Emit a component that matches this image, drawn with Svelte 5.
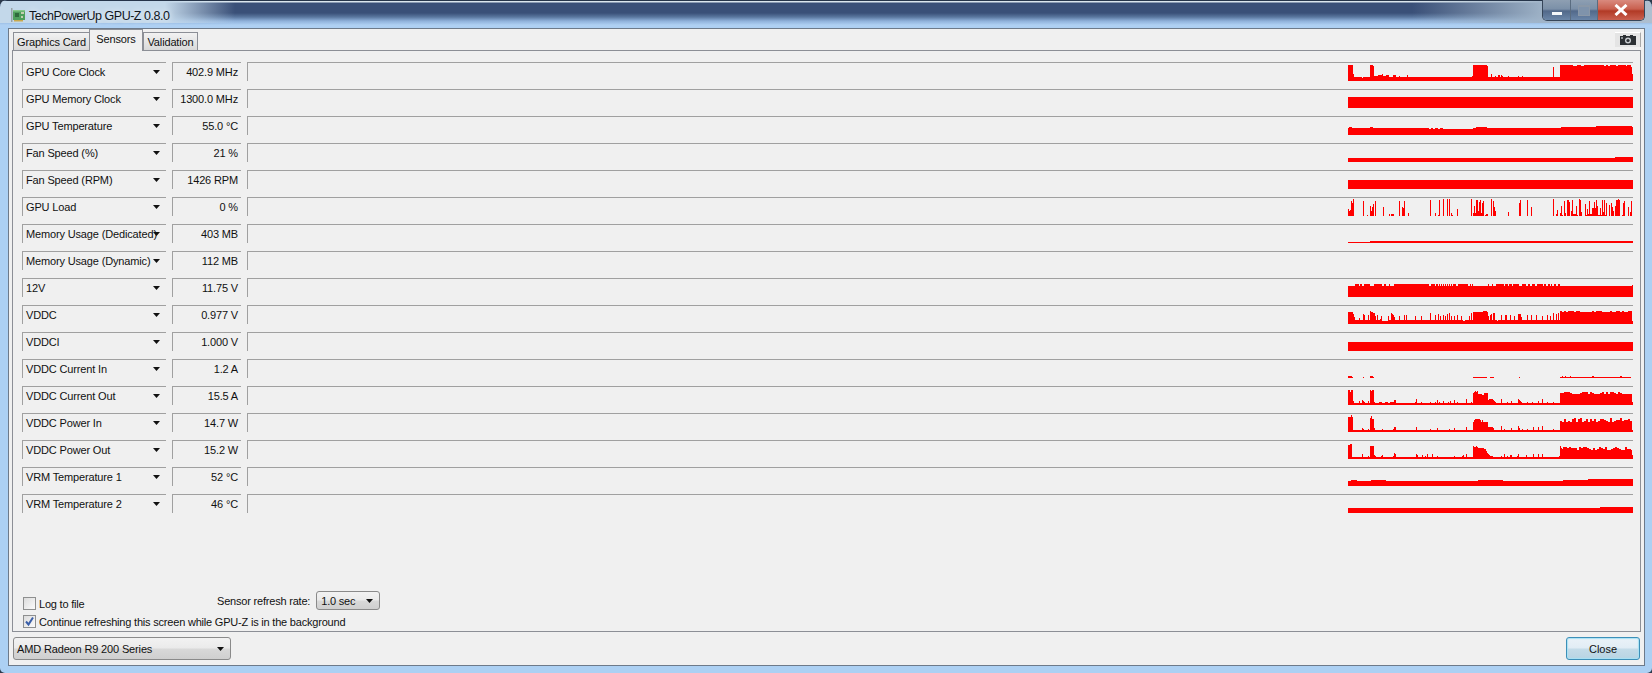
<script>
  const W = 285;
  const noise = (a, b, lo, hi, seed) => {
    const out = [];
    let s = seed;
    for (let x = a; x < b; x += 6) {
      s = (s * 137 + 59) % 251;
      out.push([x, Math.min(x + 6, b), lo + (s % (hi - lo + 1))]);
    }
    return out;
  };
  const bumps = (h, list) => list.map((p) => [p[0], p[1], h]);
  const load = [[24,7],[27,5],[30,6],[33,15],[36,13],[39,17],[69,15],[81,1],[90,10],[93,5],[96,9],[99,12],[105,15],[129,9],[147,2],[153,2],[156,2],[159,2],[177,15],[186,9],[189,8],[192,15],[204,3],[270,16],[285,3],[294,1],[297,16],[309,17],[321,17],[327,17],[333,3],[336,1],[351,7],[393,17],[399,3],[402,10],[405,3],[408,16],[411,16],[414,5],[417,14],[420,16],[423,3],[426,13],[429,15],[435,1],[438,2],[441,2],[453,17],[459,15],[462,9],[465,5],[504,4],[537,13],[540,16],[561,16],[573,9],[639,17],[648,2],[651,6],[660,3],[663,10],[666,1],[672,15],[675,3],[681,16],[684,16],[687,14],[693,5],[696,16],[699,2],[702,2],[705,2],[708,10],[711,1],[717,17],[720,16],[723,4],[735,12],[738,1],[741,7],[744,2],[747,15],[750,2],[753,2],[756,8],[759,8],[762,14],[765,8],[768,16],[771,10],[774,1],[777,1],[780,8],[783,1],[786,16],[789,4],[792,16],[795,1],[798,13],[807,11],[813,13],[816,9],[819,5],[825,10],[828,16],[831,16],[834,17],[837,16],[846,1],[849,13],[852,15],[864,9],[870,4],[873,15]];

  const sensors = [
    { name: 'GPU Core Clock', value: '402.9 MHz', base: 4, parts: [[24,39,16],[39,42,7],[66,3],[90,99,16],[99,102,15],[102,114,5],[114,126,6],[126,7],[129,138,5],[138,147,6],[159,168,6],[177,5],[201,6],[396,5],[399,441,16],[441,444,15],[453,7],[465,5],[474,480,6],[483,6],[486,5],[504,5],[534,5],[546,5],[639,14],[660,876,16],[699,711,15],[723,732,15],[792,798,15],[804,810,15],[828,834,15],[858,861,15],[873,876,14],[876,879,7]] },
    { name: 'GPU Memory Clock', value: '1300.0 MHz', base: 11, parts: [] },
    { name: 'GPU Temperature', value: '55.0 °C', base: 7, parts: [[27,36,8],[90,99,8],[267,273,6],[279,285,6],[294,300,6],[309,399,6],[399,408,7],[408,441,8],[663,768,8],[768,876,9],[876,879,8]] },
    { name: 'Fan Speed (%)', value: '21 %', base: 4, parts: [[825,879,5]] },
    { name: 'Fan Speed (RPM)', value: '1426 RPM', base: 9, parts: [] },
    { name: 'GPU Load', value: '0 %', base: 0, parts: load },
    { name: 'Memory Usage (Dedicated)', value: '403 MB', base: 2, parts: [[24,90,1]] },
    { name: 'Memory Usage (Dynamic)', value: '112 MB', base: 0, parts: [] },
    { name: '12V', value: '11.75 V', base: 11, parts: [...bumps(13, [[45,57],[60,66],[72,90],[102,126],[132,138],[147,150],[162,267],[273,285],[288,294],[297,300],[303,306],[309,312],[315,318],[321,324],[327,330],[333,336],[339,348],[354,384],[390,393],[396,399],[444,447],[456,459],[468,492],[495,504],[507,516],[519,537],[546,558],[564,570],[576,585],[591,609],[612,618],[624,630],[633,636],[642,648],[654,660]]),[876,879,12]] },
    { name: 'VDDC', value: '0.977 V', base: 4, parts: [[24,39,12],[39,10],[42,7],[57,6],[69,10],[72,9],[84,9],[90,13],[93,99,12],[99,105,11],[105,8],[111,9],[120,5],[123,8],[126,144,3],[144,8],[153,11],[156,10],[159,9],[162,7],[177,8],[192,9],[198,9],[225,8],[243,8],[270,11],[285,9],[294,10],[300,8],[309,9],[315,8],[321,10],[327,11],[333,8],[342,8],[351,9],[363,8],[369,375,3],[387,8],[393,11],[399,429,12],[429,441,13],[441,444,12],[444,8],[450,9],[453,10],[459,465,11],[465,4],[471,3],[483,9],[495,501,9],[510,9],[522,8],[534,543,10],[543,7],[561,9],[573,9],[588,9],[606,8],[621,9],[630,8],[639,11],[648,10],[654,11],...noise(660,876,12,13,17),[876,3]] },
    { name: 'VDDCI', value: '1.000 V', base: 9, parts: [] },
    { name: 'VDDC Current In', value: '1.2 A', base: 0, parts: [[24,36,2],[36,1],[69,1],[90,99,2],[99,1],[399,441,1],[450,462,1],[537,1],[660,873,1],[666,2],[675,2],[690,2],[756,762,2],[840,846,2]] },
    { name: 'VDDC Current Out', value: '15.5 A', base: 2, parts: [[24,30,15],[30,13],[33,39,15],[39,4],[57,4],[66,5],[69,4],[72,3],[84,4],[90,15],[93,14],[96,102,15],[102,3],[117,126,3],[135,144,3],[150,162,3],[162,168,5],[225,3],[228,6],[243,3],[270,3],[285,3],[291,5],[297,3],[309,4],[324,3],[330,4],[342,5],[351,3],[378,6],[393,3],[399,12],[402,13],[405,14],[408,13],[411,14],[414,426,11],[426,432,10],[432,444,12],[444,447,5],[447,459,6],[459,462,5],[462,4],[465,3],[483,6],[501,3],[513,4],[534,6],[537,5],[540,4],[543,3],[561,3],[576,3],[594,4],[606,6],[621,3],[639,3],...noise(660,876,11,13,41),[876,3]] },
    { name: 'VDDC Power In', value: '14.7 W', base: 2, parts: [[24,33,15],[33,17],[36,15],[66,4],[69,3],[84,3],[90,14],[93,16],[96,102,13],[102,4],[126,3],[159,3],[162,168,5],[228,5],[270,3],[291,4],[327,3],[342,4],[378,5],[399,10],[402,12],[405,420,13],[420,12],[423,10],[426,12],[429,10],[432,444,10],[444,459,5],[459,4],[483,6],[492,3],[513,4],[534,6],[537,4],[546,3],[561,3],[579,5],[594,5],[606,6],[639,3],[660,666,11],...noise(666,876,10,14,73),[876,2]] },
    { name: 'VDDC Power Out', value: '15.2 W', base: 2, parts: [[24,36,14],[30,36,15],[66,5],[84,3],[90,102,13],[102,4],[105,3],[123,3],[126,4],[159,3],[162,165,6],[165,168,5],[228,5],[231,4],[246,4],[255,3],[261,5],[276,5],[291,3],[342,3],[366,3],[369,4],[378,5],[399,13],[402,408,12],[408,13],[411,414,12],[414,432,11],[432,438,10],[438,8],[441,6],[444,5],[447,4],[450,459,3],[483,3],[492,5],[501,3],[510,516,4],[531,3],[534,5],[558,4],[579,5],[594,5],[606,5],[657,3],[660,13],[663,11],[666,669,10],...noise(669,876,9,12,101),[876,4]] },
    { name: 'VRM Temperature 1', value: '52 °C', base: 5, parts: [[33,51,6],[93,138,6],[414,489,6],[669,744,6],[744,879,7]] },
    { name: 'VRM Temperature 2', value: '46 °C', base: 5, parts: [[780,879,6]] }
  ];

  const H = 18;
  const toPath = (s) => {
    const a = new Array(W).fill(s.base);
    for (const p of s.parts) {
      const [z0, z1, h] = p.length === 3 ? p : [p[0], p[0] + 3, p[1]];
      const i0 = Math.round((z0 - 24) / 3), i1 = Math.round((z1 - 24) / 3);
      for (let i = i0; i < i1 && i < W; i++) a[i] = h;
    }
    let d = `M0 ${H}`;
    a.forEach((h, i) => { d += `V${H - h}H${i + 1}`; });
    return d + `V${H}Z`;
  };
</script>

{#snippet caret()}
  <svg class="caret" width="7" height="4" viewBox="0 0 7 4"><path d="M0 0H7L3.5 4Z" /></svg>
{/snippet}

<div class="window">
  <header class="titlebar">
    <svg class="appicon" width="16" height="16" viewBox="0 0 16 16">
      <path d="M1 1h1.5v14H1z" fill="#9aa4a8" />
      <path d="M3 3h12v10H3z" fill="#4f9f5c" />
      <path d="M3 3h12v1.5H3z" fill="#86c98a" />
      <path d="M5 6h4v4H5z" fill="#2f6a3c" />
      <path d="M11 5h3v2h-3zM11 9h2v2h-2z" fill="#c4cfb0" />
      <path d="M4 13h9v1.5H4z" fill="#c9a94e" />
    </svg>
    <span class="title">TechPowerUp GPU-Z 0.8.0</span>
    <div class="controls">
      <div class="ctl min"><span class="minbar"></span></div>
      <div class="ctl max"><span class="maxbox"></span></div>
      <div class="ctl close">
        <svg width="14" height="12" viewBox="0 0 14 12"><path d="M1.5 1 L12.5 11 M12.5 1 L1.5 11" stroke="#fff" stroke-width="3" fill="none" /></svg>
      </div>
    </div>
  </header>

  <div class="client">
    <nav class="tabs">
      <div class="tab first">Graphics Card</div>
      <div class="tab active">Sensors</div>
      <div class="tab third">Validation</div>
      <div class="camera">
        <svg width="16" height="10" viewBox="0 0 16 10">
          <path d="M0 1h16v9H0z" fill="#2b2f33" />
          <path d="M3 0h3v1H3zM10 0h3v1h-3z" fill="#2b2f33" />
          <circle cx="8" cy="5.5" r="3" fill="#c8ccd0" />
          <circle cx="8" cy="5.5" r="1.6" fill="#2b2f33" />
          <path d="M1 2h2v2H1z" fill="#8d9398" />
        </svg>
      </div>
    </nav>

    <main class="page">
      <div class="rows">
        {#each sensors as s}
          <div class="row">
            <div class="name"><span>{s.name}</span>{@render caret()}</div>
            <div class="value">{s.value}</div>
            <div class="graph">
              <svg width={W} height={H} viewBox="0 0 {W} {H}"><path class="plot" d={toPath(s)} /></svg>
            </div>
          </div>
        {/each}
      </div>

      <div class="options">
        <div class="opt-top">
          <label class="check"><span class="box"></span>Log to file</label>
          <div class="refresh">
            <span>Sensor refresh rate:</span>
            <div class="combo small">1.0 sec {@render caret()}</div>
          </div>
        </div>
        <label class="check second">
          <span class="box">
            <svg width="11" height="11" viewBox="0 0 11 11"><path d="M2 5.5 L4.5 8.5 L9 1.5" stroke="#3b5fa8" stroke-width="2" fill="none" /></svg>
          </span>Continue refreshing this screen while GPU-Z is in the background
        </label>
      </div>
    </main>

    <footer class="footer">
      <div class="combo device">AMD Radeon R9 200 Series {@render caret()}</div>
      <button class="closebtn">Close</button>
    </footer>
  </div>
</div>

<style>
  :global(body) {
    margin: 0;
    background: #2c3a4c;
  }
  .window {
    width: 1652px;
    height: 673px;
    box-sizing: border-box;
    display: flex;
    flex-direction: column;
    overflow: hidden;
    border-radius: 7px 7px 5px 5px;
    background: #acd0f3;
    font: 11px "Liberation Sans", Arial, sans-serif;
    letter-spacing: -0.15px;
    color: #111;
    padding-bottom: 7px;
  }
  .titlebar {
    height: 28px;
    flex: none;
    display: flex;
    align-items: flex-start;
    padding-left: 10px;
    box-sizing: border-box;
    position: relative;
    border-top: 1px solid #26354a;
    background:
      linear-gradient(90deg, #c3d8ea 0, #c3d8ea 165px, rgba(195, 216, 234, 0) 235px),
      linear-gradient(270deg, #aebfd0 0, #a0b4c8 106px, rgba(160, 180, 200, 0) 240px),
      linear-gradient(180deg, #dbe6ee 0, #dbe6ee 1px, #3a5078 2px, #3a5078 12px, #5a779f 16px, #8fb1da 20px, #aed0f3 24px);
    background-size: 100% 22px, 100% 22px, 100% 100%;
    background-repeat: no-repeat;
  }
  .appicon {
    margin-top: 6px;
  }
  .title {
    margin: 7px 0 0 3px;
    font-size: 12.5px;
    letter-spacing: -0.48px;
    line-height: 16px;
    color: #10161c;
    text-shadow: 0 0 6px #fff;
  }
  .controls {
    position: absolute;
    right: 7px;
    top: -1px;
    height: 20px;
    display: flex;
    border: 1px solid #36465a;
    border-top: none;
    border-radius: 0 0 5px 5px;
    overflow: hidden;
  }
  .ctl {
    display: flex;
    align-items: center;
    justify-content: center;
    box-sizing: border-box;
    border-right: 1px solid #5a6c80;
  }
  .min, .max {
    width: 28px;
    background: linear-gradient(180deg, #8e9fb2 0, #7b90a8 45%, #52698a 55%, #6b86a8 100%);
  }
  .max { width: 27px; }
  .close {
    width: 46px;
    border-right: none;
    background: linear-gradient(180deg, #d98a7e 0, #c9604f 45%, #b23a26 55%, #c9604f 100%);
  }
  .minbar {
    width: 10px;
    height: 3px;
    margin-top: 6px;
    background: #f4f7fa;
  }
  .maxbox {
    width: 10px;
    height: 8px;
    border: 1px solid #8a98a8;
    border-top-width: 2px;
    background: #7f93ab;
  }
  .client {
    flex: 1;
    min-height: 0;
    margin: 0 7px 0 8px;
    border: 1px solid #6d7a8a;
    background: #f0f0f0;
    display: flex;
    flex-direction: column;
  }
  .tabs {
    height: 21px;
    flex: none;
    display: flex;
    align-items: flex-end;
    padding: 0 3px 0 4px;
  }
  .tab {
    height: 18px;
    box-sizing: border-box;
    border: 1px solid #8c8f96;
    border-bottom: none;
    margin-right: -1px;
    line-height: 18px;
    text-align: center;
    background: linear-gradient(180deg, #f2f2f2, #d9d9d9);
    white-space: nowrap;
  }
  .first { width: 77px; }
  .third { width: 55px; margin-left: 1px; }
  .tab.active {
    width: 54px;
    height: 22px;
    margin-bottom: -1px;
    background: #f0f0f0;
    line-height: 18px;
    position: relative;
    z-index: 1;
  }
  .camera {
    margin-left: auto;
    margin-bottom: 3px;
    width: 26px;
    height: 15px;
    box-sizing: border-box;
    border-top: 1px solid #fff;
    border-right: 1px solid #a8a8a8;
    background: #e4e4e4;
    display: flex;
    align-items: center;
    justify-content: center;
  }
  .page {
    height: 582px;
    flex: none;
    box-sizing: border-box;
    margin: 0 3px 0 3px;
    border: 1px solid #8c8f96;
    padding: 11px 5px 3px 9px;
    display: flex;
    flex-direction: column;
  }
  .rows {
    display: flex;
    flex-direction: column;
    gap: 8px;
  }
  .row {
    height: 19px;
    display: flex;
    gap: 6px;
  }
  .name, .value, .graph {
    box-sizing: border-box;
    height: 19px;
    border-top: 1px solid #a0a0a0;
    border-left: 1px solid #a0a0a0;
    line-height: 19px;
    white-space: nowrap;
  }
  .name {
    width: 144px;
    padding-left: 3px;
    position: relative;
  }
  .name .caret {
    position: absolute;
    left: 130px;
    top: 7px;
  }
  .value {
    width: 69px;
    text-align: right;
    padding-right: 3px;
  }
  .graph {
    width: 1386px;
    display: flex;
    justify-content: flex-end;
  }
  .plot {
    fill: #ff0000;
    shape-rendering: crispEdges;
  }
  .caret path {
    fill: #111;
  }
  .options {
    margin-top: auto;
    display: flex;
    flex-direction: column;
    letter-spacing: -0.2px;
  }
  .opt-top {
    display: flex;
    align-items: flex-end;
    height: 19px;
  }
  .check {
    display: flex;
    align-items: center;
    gap: 3px;
    margin-left: 1px;
    height: 13px;
  }
  .opt-top .check {
    width: 194px;
  }
  .second {
    margin-top: 5px;
  }
  .box {
    width: 13px;
    height: 13px;
    flex: none;
    box-sizing: border-box;
    border: 1px solid #8e8f8f;
    background: linear-gradient(135deg, #dcdcdc, #fbfbfb);
    display: flex;
    align-items: center;
    justify-content: center;
  }
  .refresh {
    display: flex;
    align-items: center;
    gap: 6px;
    height: 19px;
  }
  .combo {
    box-sizing: border-box;
    border: 1px solid #8a8a8a;
    border-radius: 3px;
    background: linear-gradient(180deg, #f2f2f2 0, #ebebeb 45%, #d8d8d8 55%, #cfcfcf 100%);
    display: flex;
    align-items: center;
    justify-content: space-between;
    padding: 0 6px 0 3px;
    white-space: nowrap;
  }
  .small {
    width: 64px;
    height: 19px;
    padding-left: 4px;
  }
  .footer {
    flex: 1;
    display: flex;
    justify-content: space-between;
    align-items: flex-start;
    padding: 5px 4px 0 4px;
  }
  .device {
    width: 218px;
    height: 23px;
  }
  .closebtn {
    width: 74px;
    height: 23px;
    padding: 0;
    box-sizing: border-box;
    font: inherit;
    color: #111;
    border: 1px solid #3c8fb8;
    border-radius: 3px;
    box-shadow: inset 0 0 1px 1px #a8e2f4;
    background: linear-gradient(180deg, #eaf2f8 0, #e2edf5 45%, #c3dbe8 55%, #b8d4e3 100%);
  }
</style>
